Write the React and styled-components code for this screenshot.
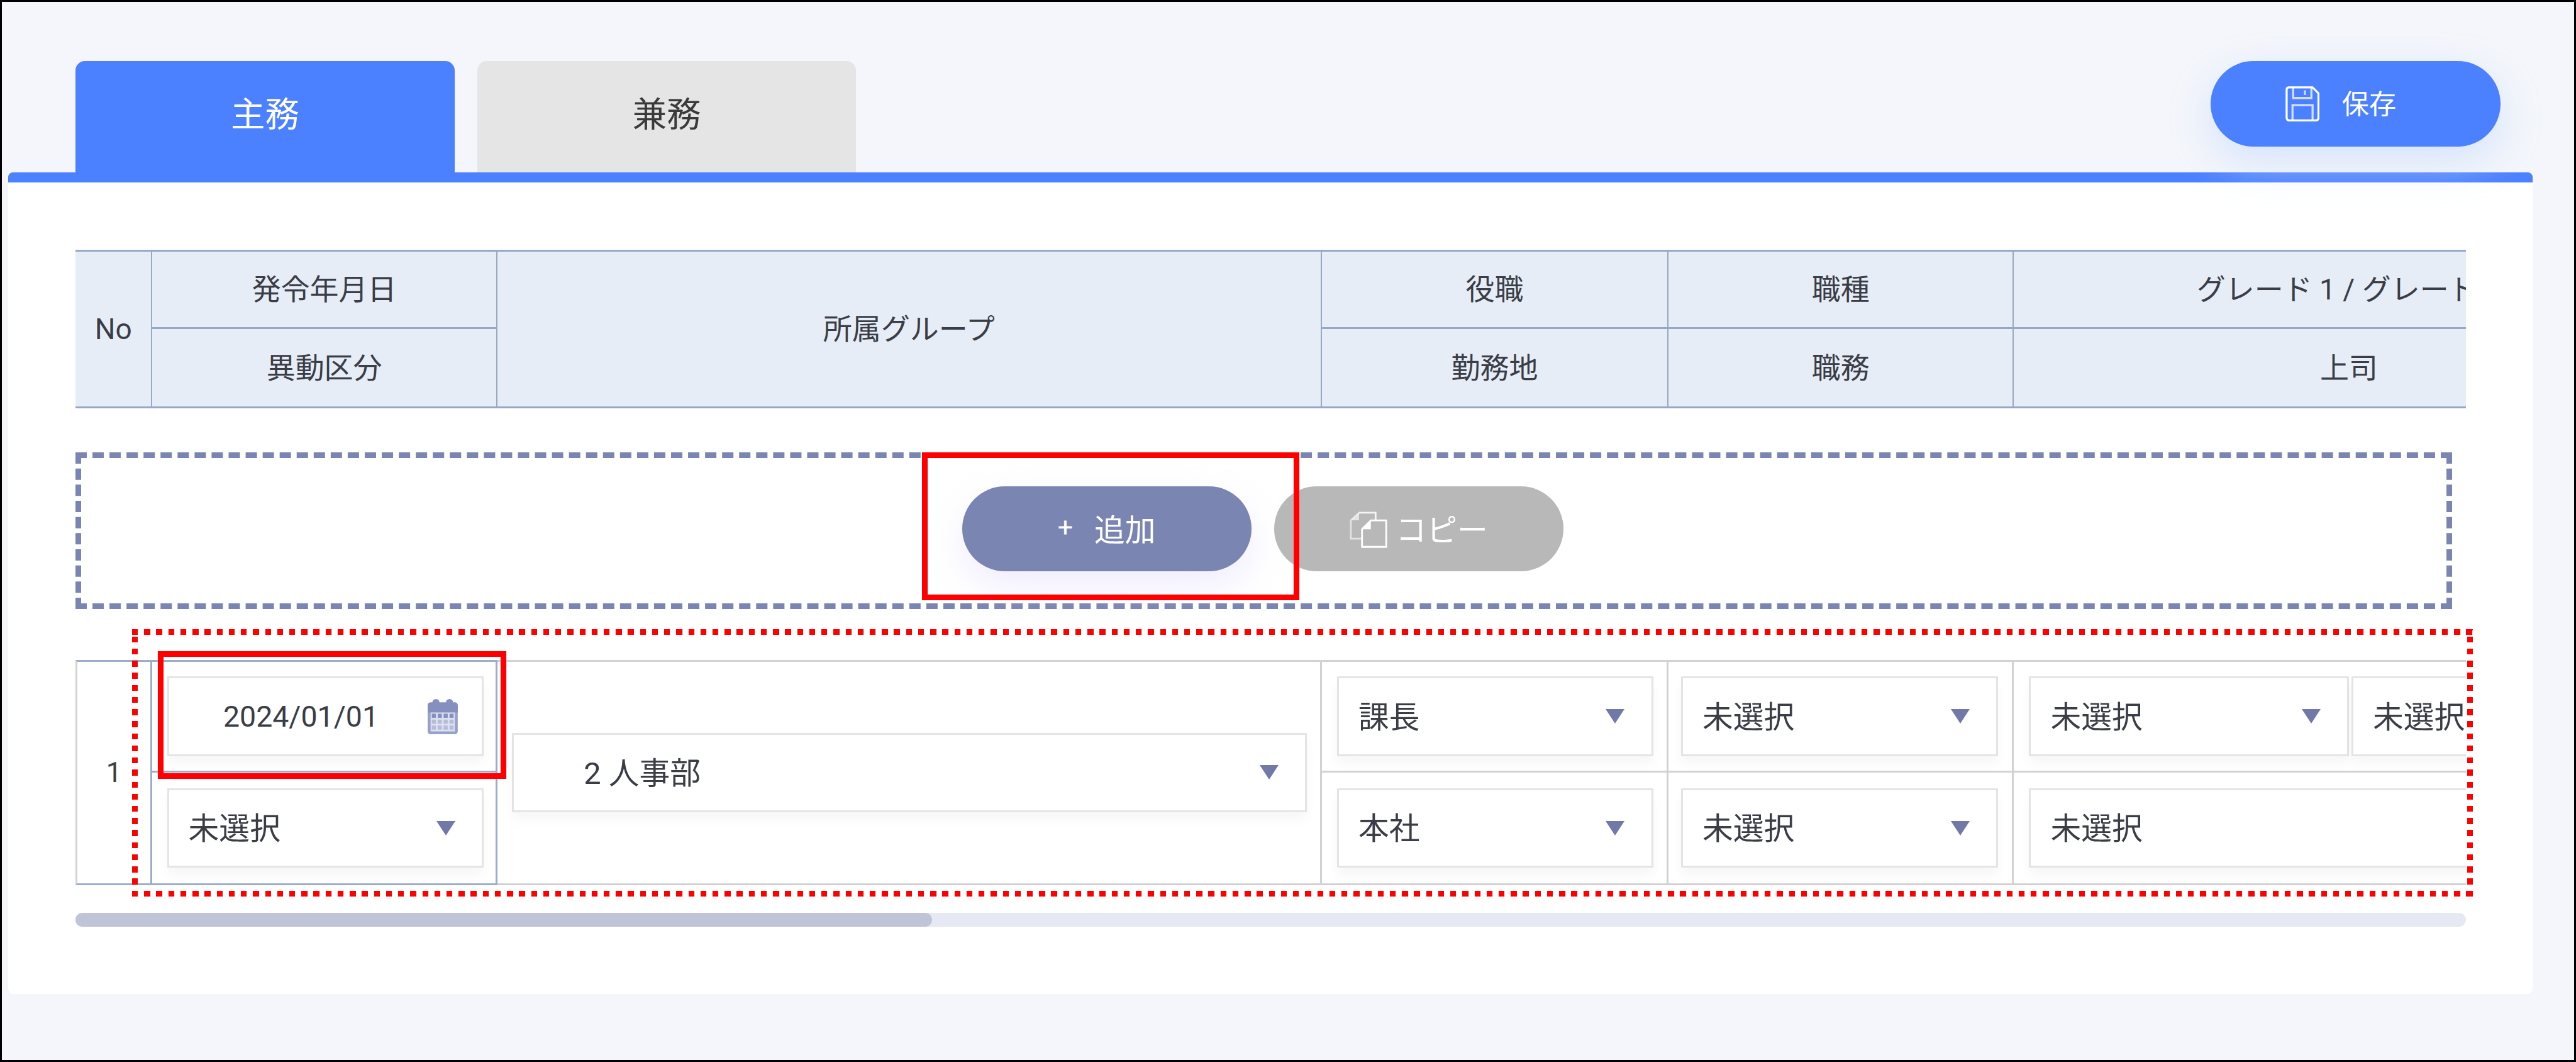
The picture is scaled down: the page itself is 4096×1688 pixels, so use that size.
import React from 'react';
import styled, { createGlobalStyle } from 'styled-components';

const u = (v) => `${(v * 0.93815).toFixed(2)}px`;

const GlobalStyle = createGlobalStyle`
  html, body {
    margin: 0;
    padding: 0;
  }
  body {
    font-family: Roboto, "Noto Sans CJK JP", sans-serif;
    color: #3a3d46;
  }
  * {
    box-sizing: border-box;
  }
`;

const Frame = styled.div`
  width: 4096px;
  height: 1688px;
  border: 3px solid #000;
  background: #f4f6fb;
  padding-top: ${u(100)};
  overflow: hidden;
`;

const TabBar = styled.div`
  display: flex;
  justify-content: space-between;
  align-items: flex-start;
  height: ${u(189)};
  padding: 0 ${u(125)} 0 ${u(125)};
`;

const Tabs = styled.div`
  display: flex;
  gap: ${u(39)};
`;

const Tab = styled.div`
  width: ${u(642)};
  height: ${u(189)};
  display: flex;
  align-items: center;
  justify-content: center;
  padding-bottom: ${u(16)};
  border-radius: ${u(16)} ${u(16)} 0 0;
  font-size: ${u(58)};
  background: ${(p) => (p.$active ? '#4b80ff' : '#e5e5e5')};
  color: ${(p) => (p.$active ? '#fff' : '#3a3a3a')};
`;

const SaveButton = styled.button`
  position: relative;
  z-index: 2;
  width: ${u(491)};
  height: ${u(145)};
  display: flex;
  align-items: center;
  justify-content: center;
  gap: ${u(38)};
  padding: 0 ${u(50)} ${u(6)} 0;
  border: none;
  border-radius: ${u(73)};
  background: #4b80ff;
  color: #fff;
  font-family: inherit;
  font-size: ${u(46)};
  box-shadow: 0 ${u(24)} ${u(70)} rgba(205, 222, 252, 0.8);
`;

const SaveIcon = styled.svg`
  width: ${u(58)};
  height: ${u(60)};
  margin-top: ${u(6)};
`;

const Panel = styled.div`
  width: ${u(4278)};
  height: ${u(1392)};
  margin-left: ${u(11)};
  padding: ${u(114)} ${u(113)} 0 ${u(114)};
  background: #fff;
  border-top: ${u(18)} solid #4b80ff;
  border-radius: ${u(8)} ${u(8)} ${u(10)} ${u(10)};
`;

const Clip = styled.div`
  width: ${u(4051)};
  overflow: hidden;
`;

const HeadGrid = styled.div`
  display: grid;
  width: ${u(4423)};
  grid-template-columns: ${u(130)} ${u(585)} ${u(1397)} ${u(588)} ${u(585)} ${u(1138)};
  grid-template-rows: ${u(131)} ${u(134)};
  background: #e7edf6;
  border-top: 3px solid #97a8c6;
`;

const HeadCell = styled.div`
  display: flex;
  align-items: center;
  justify-content: center;
  grid-row: ${(p) => (p.$tall ? '1 / span 2' : 'auto')};
  grid-column: ${(p) => p.$col};
  padding-bottom: ${(p) => (p.$latin ? 0 : u(8))};
  font-size: ${u(49)};
  white-space: nowrap;
  border-right: 2px solid #97a8c6;
  border-bottom: 3px solid #97a8c6;
`;

const AddArea = styled.div`
  position: relative;
  width: ${u(4028)};
  height: ${u(265)};
  margin-top: ${u(75)};
  display: flex;
  align-items: center;
  padding: 0 0 ${u(5)} ${u(1493)};
  gap: ${u(39)};
  border: 9px dashed #7a85b1;
`;

const PillButton = styled.button`
  position: relative;
  width: ${u(490)};
  height: ${u(144)};
  display: flex;
  align-items: center;
  justify-content: center;
  flex: none;
  border: none;
  border-radius: ${u(72)};
  padding: 0 0 ${u(6)};
  font-family: inherit;
  font-size: ${u(52)};
  color: #fff;
  background: ${(p) => (p.$disabled ? '#b8b8b8' : '#7a85b1')};
  box-shadow: ${(p) =>
    p.$disabled ? 'none' : `0 ${u(24)} ${u(60)} rgba(222, 212, 250, 0.45)`};
`;

const Plus = styled.span`
  font-size: ${u(46)};
  margin-right: ${u(36)};
`;

const CopyIcon = styled.svg`
  width: ${u(64)};
  height: ${u(62)};
  margin: 0 ${u(14)} ${u(-8)} 0;
`;

const RedBox = styled.div`
  position: absolute;
  z-index: 3;
  pointer-events: none;
  border: 9px solid #ff0000;
  left: ${(p) => u(p.$left)};
  top: ${(p) => u(p.$top)};
  width: ${(p) => u(p.$w)};
  height: ${(p) => u(p.$h)};
`;

const RowsArea = styled.div`
  position: relative;
  margin-top: ${u(87)};
`;

const RowGrid = styled.div`
  display: grid;
  width: ${u(4423)};
  grid-template-columns: ${u(130)} ${u(585)} ${u(1397)} ${u(588)} ${u(585)} ${u(1138)};
  grid-template-rows: ${u(191)} ${u(190)};
`;

const RowCell = styled.div`
  display: flex;
  align-items: center;
  min-width: 0;
  gap: ${u(4)};
  grid-row: ${(p) => (p.$tall ? '1 / span 2' : 'auto')};
  grid-column: ${(p) => p.$col};
  padding: 0 ${(p) => u(p.$right ?? 23)} 0 ${(p) => u(p.$left ?? 26)};
  font-size: ${u(47)};
  --line: ${(p) => (p.$accent ? '#9cadcc' : '#d2d2d2')};
  border-right: 3px solid var(--line);
  border-bottom: 3px solid var(--line);
  border-top: ${(p) => (p.$first ? '3px solid var(--line)' : 'none')};
  border-left: ${(p) => (p.$edge ? '3px solid #d2d2d2' : 'none')};
`;

const RowNumber = styled.span`
  width: 100%;
  text-align: center;
`;

const Select = styled.div`
  flex: 1;
  min-width: 0;
  height: ${u(135)};
  display: flex;
  align-items: center;
  justify-content: space-between;
  padding: 0 ${(p) => u(p.$end ?? 45)} 0 ${(p) => u(p.$indent ?? 33)};
  background: #fff;
  border: 3px solid #e4e4e4;
  font-size: ${u(52)};
  white-space: nowrap;
  box-shadow: 0 ${u(14)} ${u(18)} rgba(0, 0, 0, 0.035);
`;

const SelectLabel = styled.span`
  margin-bottom: ${u(8)};
`;

const DateText = styled.span`
  font-size: ${u(49.5)};
`;

const Arrow = styled.i`
  flex: none;
  width: 0;
  height: 0;
  border-left: ${u(16.5)} solid transparent;
  border-right: ${u(16.5)} solid transparent;
  border-top: ${u(25)} solid #7079a8;
`;

const CalendarIcon = styled.svg`
  flex: none;
  width: ${u(51)};
  height: ${u(61)};
`;

const DottedFrame = styled.div`
  position: absolute;
  z-index: 3;
  pointer-events: none;
  left: ${u(96)};
  top: ${u(-52)};
  width: ${u(3967)};
  height: ${u(453)};
  --dash: #ff0000 0 ${u(10)}, transparent ${u(10)} ${u(20.5)};
  background:
    repeating-linear-gradient(90deg, var(--dash)) 0 0 / 100% ${u(10)} no-repeat,
    repeating-linear-gradient(90deg, var(--dash)) 0 100% / 100% ${u(10)} no-repeat,
    repeating-linear-gradient(0deg, var(--dash)) 0 0 / ${u(10)} 100% no-repeat,
    repeating-linear-gradient(0deg, var(--dash)) 100% 0 / ${u(10)} 100% no-repeat;
`;

const ScrollTrack = styled.div`
  width: ${u(4051)};
  height: ${u(24)};
  margin-top: ${u(47)};
  border-radius: ${u(12)};
  background: #e6e8f4;
`;

const ScrollThumb = styled.div`
  width: ${u(1451)};
  height: 100%;
  border-radius: ${u(12)};
  background: #bfc4d6;
`;

const Floppy = () => (
  <SaveIcon viewBox="0 0 58 60" fill="none" stroke="#fff" strokeWidth="3.5">
    <path d="M6 2H46L56 12V53Q56 58 51 58H7Q2 58 2 53V6Q2 2 6 2Z" />
    <path d="M13 3V20H44V3" strokeOpacity="0.75" />
    <path d="M33 7V15" strokeOpacity="0.7" />
    <path d="M12 57V32H46V57" strokeOpacity="0.75" />
  </SaveIcon>
);

const Copy = () => (
  <CopyIcon viewBox="0 0 64 62" fill="none" stroke="#fff" strokeWidth="3">
    <path d="M16 2H44V14" strokeOpacity="0.85" />
    <path d="M16 2L2 15V46H20" strokeOpacity="0.6" />
    <path d="M36 15H62V60H21V30Z" />
    <path d="M36 15V30H21Z" fill="#fff" stroke="none" />
    <path d="M16 2V15H2Z" fill="#fff" fillOpacity="0.6" stroke="none" />
  </CopyIcon>
);

const Calendar = () => (
  <CalendarIcon viewBox="0 0 51 61">
    <rect y="7" width="51" height="54" rx="5" fill="#98a1ca" />
    <path d="M0 24V12Q0 7 5 7H46Q51 7 51 12V24Z" fill="#8590bf" />
    <circle cx="14" cy="7" r="6" fill="#8590bf" />
    <circle cx="37" cy="7" r="6" fill="#8590bf" />
    <rect x="5" y="24" width="41" height="32" fill="#dde1f0" />
    {[0, 1, 2].map((r) =>
      [0, 1, 2, 3].map((c) => (
        <rect
          key={`${r}-${c}`}
          x={7 + c * 10}
          y={26 + r * 10}
          width="7"
          height="7"
          fill={r === 0 ? '#8590bf' : '#b6bdda'}
        />
      ))
    )}
  </CalendarIcon>
);

const Picker = ({ value, ...rest }) => (
  <Select {...rest}>
    <SelectLabel>{value}</SelectLabel>
    <Arrow />
  </Select>
);

const App = () => {
  return (
    <>
      <GlobalStyle />
      <Frame>
        <TabBar>
          <Tabs>
            <Tab $active>主務</Tab>
            <Tab>兼務</Tab>
          </Tabs>
          <SaveButton>
            <Floppy />
            保存
          </SaveButton>
        </TabBar>

        <Panel>
          <Clip>
            <HeadGrid>
              <HeadCell $tall $latin $col={1}>No</HeadCell>
              <HeadCell $col={2}>発令年月日</HeadCell>
              <HeadCell $tall $col={3}>所属グループ</HeadCell>
              <HeadCell $col={4}>役職</HeadCell>
              <HeadCell $col={5}>職種</HeadCell>
              <HeadCell $col={6}>グレード 1 / グレード 2</HeadCell>
              <HeadCell $col={2}>異動区分</HeadCell>
              <HeadCell $col={4}>勤務地</HeadCell>
              <HeadCell $col={5}>職務</HeadCell>
              <HeadCell $col={6}>上司</HeadCell>
            </HeadGrid>
          </Clip>

          <AddArea>
            <PillButton>
              <Plus>+</Plus>追加
            </PillButton>
            <PillButton $disabled>
              <Copy />
              コピー
            </PillButton>
            <RedBox $left={1425} $top={-10} $w={639} $h={251} />
          </AddArea>

          <RowsArea>
            <Clip>
              <RowGrid>
                <RowCell $tall $col={1} $first $accent $edge $left={0} $right={0}>
                  <RowNumber>1</RowNumber>
                </RowCell>
                <RowCell $col={2} $first $accent $left={25} $right={20}>
                  <Select $indent={92} $end={41}>
                    <DateText>2024/01/01</DateText>
                    <Calendar />
                  </Select>
                </RowCell>
                <RowCell $tall $col={3} $first $left={25} $right={22}>
                  <Picker value="2 人事部" $indent={118} />
                </RowCell>
                <RowCell $col={4} $first $left={26}>
                  <Picker value="課長" />
                </RowCell>
                <RowCell $col={5} $first $left={21}>
                  <Picker value="未選択" />
                </RowCell>
                <RowCell $col={6} $first $left={26} $right={20}>
                  <Picker value="未選択" />
                  <Picker value="未選択" />
                </RowCell>

                <RowCell $col={2} $accent $left={25} $right={20}>
                  <Picker value="未選択" />
                </RowCell>
                <RowCell $col={4} $left={26}>
                  <Picker value="本社" />
                </RowCell>
                <RowCell $col={5} $left={21}>
                  <Picker value="未選択" />
                </RowCell>
                <RowCell $col={6} $left={26} $right={20}>
                  <Picker value="未選択" />
                </RowCell>
              </RowGrid>
            </Clip>
            <DottedFrame />
            <RedBox $left={139} $top={-15} $w={591} $h={216} />
            <ScrollTrack>
              <ScrollThumb />
            </ScrollTrack>
          </RowsArea>
        </Panel>
      </Frame>
    </>
  );
};

export default App;
